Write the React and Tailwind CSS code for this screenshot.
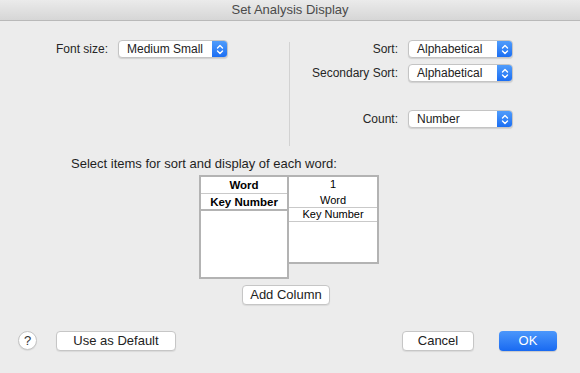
import React from 'react';

const font = { fontFamily: '"Liberation Sans", Arial, sans-serif' };

const Stepper = () => (
  <svg width="8" height="11" viewBox="0 0 8 11" fill="none" stroke="white" strokeWidth="1.4" strokeLinecap="round" strokeLinejoin="round">
    <path d="M1.5 4 L4 1.5 L6.5 4" />
    <path d="M1.5 7 L4 9.5 L6.5 7" />
  </svg>
);

const Popup = ({ value, width }) => (
  <div
    className="flex h-[18px] items-stretch overflow-hidden rounded-[4px] border border-[#c4c4c4] bg-white shadow-[0_1px_1px_rgba(0,0,0,0.12)]"
    style={{ width }}
  >
    <div className="flex-1 pl-[8px] text-[12px] leading-[16px] text-[#222]">{value}</div>
    <div className="flex w-[15px] items-center justify-center bg-gradient-to-b from-[#4f9cfb] to-[#1b6ef3]">
      <Stepper />
    </div>
  </div>
);

const Button = ({ children, className = '' }) => (
  <button
    className={`h-[20px] rounded-[4px] border border-[#c6c6c6] bg-white text-[13px] leading-[18px] text-[#222] shadow-[0_1px_1px_rgba(0,0,0,0.08)] ${className}`}
  >
    {children}
  </button>
);

const Row = ({ label, value }) => (
  <div className="flex h-[18px] items-center">
    <div className="w-[118px] pr-[10px] text-right text-[12px] leading-[18px] text-[#262626]">{label}</div>
    <Popup value={value} width={105} />
  </div>
);

export default function App() {
  return (
    <div className="h-[373px] w-[580px] bg-[#ececec] text-[#222]" style={font}>
      {/* title bar */}
      <div className="flex h-[21px] items-center justify-center border-b border-[#b9b9b9] bg-gradient-to-b from-[#ebebeb] to-[#d6d6d6] text-[13px] text-[#4a4a4a]">
        Set Analysis Display
      </div>

      {/* top settings */}
      <div className="mt-[19px] flex">
        <div className="w-[289px]">
          <div className="flex h-[18px] items-center">
            <div className="w-[118px] pr-[10px] text-right text-[12px] leading-[18px] text-[#262626]">Font size:</div>
            <Popup value="Medium Small" width={110} />
          </div>
        </div>
        <div className="mt-[2px] h-[104px] w-px bg-[#d2d2d2]" />
        <div className="flex flex-col">
          <Row label="Sort:" value="Alphabetical" />
          <div className="mt-[6px]">
            <Row label="Secondary Sort:" value="Alphabetical" />
          </div>
          <div className="mt-[28px]">
            <Row label="Count:" value="Number" />
          </div>
        </div>
      </div>

      {/* column chooser */}
      <div className="mt-[8px] pl-[71px] text-[13px] text-[#1f1f1f]">
        Select items for sort and display of each word:
      </div>
      <div className="mt-[1px] flex pl-[199px]">
        <div className="h-[104px] w-[90px] border-2 border-[#b3b3b3] bg-white text-[11.5px] font-bold text-black">
          <div className="h-[17px] border-b border-[#c9c9c9] text-center leading-[17px]">Word</div>
          <div className="h-[17px] border-b-2 border-[#b3b3b3] text-center leading-[17px]">Key Number</div>
        </div>
        <div className="-ml-[2px] h-[89px] w-[92px] border-2 border-[#b3b3b3] bg-white text-[11px] text-black">
          <div className="h-[16px] text-center leading-[14px]">1</div>
          <div className="h-[15px] border-b border-[#c9c9c9] text-center leading-[15px]">Word</div>
          <div className="h-[14px] border-b border-[#c9c9c9] text-center leading-[13px]">Key Number</div>
        </div>
      </div>
      <div className="mt-[6px] flex pl-[242px]">
        <Button className="h-[18px] w-[88px] leading-[16px]">Add Column</Button>
      </div>

      {/* footer */}
      <div className="mt-[26px] flex items-center px-[18px]">
        <div className="flex h-[19px] w-[19px] items-center justify-center rounded-full border border-[#c4c4c4] bg-white text-[13px] text-[#333] shadow-[0_1px_1px_rgba(0,0,0,0.08)]">
          ?
        </div>
        <Button className="ml-[19px] w-[120px]">Use as Default</Button>
        <div className="flex-1" />
        <Button className="w-[72px]">Cancel</Button>
        <button className="ml-[25px] h-[20px] w-[58px] rounded-[4px] bg-gradient-to-b from-[#4b97fb] to-[#1869f1] text-[13px] leading-[20px] text-white shadow-[0_1px_1px_rgba(0,0,0,0.15)]">
          OK
        </button>
        <div className="w-[5px]" />
      </div>
    </div>
  );
}
